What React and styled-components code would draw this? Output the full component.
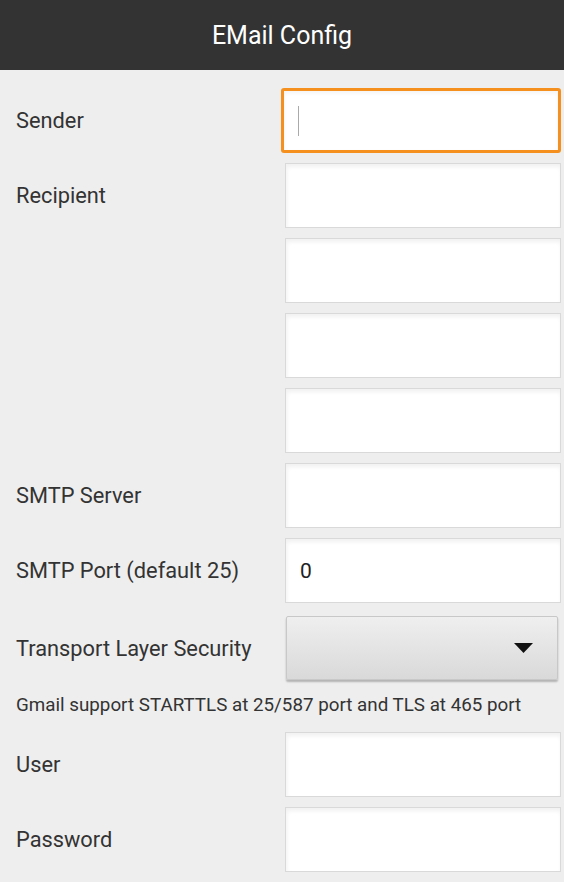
import React from 'react';
import styled, {createGlobalStyle} from 'styled-components';

const GlobalStyle = createGlobalStyle`
  html, body {
    margin: 0;
    padding: 0;
    background: #eeeeee;
  }
  body {
    font-family: Roboto, "Noto Sans", sans-serif;
  }
`;

const rows = [
    {label: "Sender", focused: true},
    {label: "Recipient"},
    {label: ""},
    {label: ""},
    {label: ""},
    {label: "SMTP Server"},
    {label: "SMTP Port (default 25)", value: "0"},
];

const App = () => {
    return (
        <Page>
            <GlobalStyle/>
            <Header>
                <Title>EMail Config</Title>
            </Header>
            <Form>
                {rows.map((row, i) => (
                    <Row key={i}>
                        <Label>{row.label}</Label>
                        <Field focused={row.focused ? 1 : 0}>
                            {row.focused && <Caret/>}
                            {row.value}
                        </Field>
                    </Row>
                ))}
                <SelectRow>
                    <Label>Transport Layer Security</Label>
                    <Select>
                        <svg width="19" height="10" viewBox="0 0 19 10">
                            <polygon points="0,0 19,0 9.5,10" fill="#111"/>
                        </svg>
                    </Select>
                </SelectRow>
                <Hint>Gmail support STARTTLS at 25/587 port and TLS at 465 port</Hint>
                <Row>
                    <Label>User</Label>
                    <Field/>
                </Row>
                <Row>
                    <Label>Password</Label>
                    <Field/>
                </Row>
            </Form>
        </Page>
    )
}

const Page = styled.div`
  width: 564px;
  min-height: 882px;
  background: #eeeeee;
`;

const Header = styled.header`
  height: 70px;
  background: #333333;
  display: flex;
  align-items: center;
  justify-content: center;
`;

const Title = styled.h1`
  margin: 0;
  color: #ffffff;
  font-size: 25px;
  font-weight: 400;
`;

const Form = styled.div`
  display: flex;
  flex-direction: column;
  gap: 10px;
  padding: 18px 3px 0 16px;
`;

const Row = styled.div`
  display: flex;
  align-items: center;
  height: 65px;
`;

const SelectRow = styled(Row)`
  height: 70px;
`;

const Label = styled.div`
  width: 269px;
  color: #333333;
  font-size: 21.8px;
`;

const Field = styled.div`
  box-sizing: border-box;
  width: 276px;
  height: 65px;
  display: flex;
  align-items: center;
  padding-left: 14px;
  background: #ffffff;
  color: #222222;
  font-size: 21px;
  border: 1px solid #d9d9d9;
  box-shadow: inset 1px 3px 4px rgba(0, 0, 0, 0.06);
  ${p => p.focused && `
    width: 281px;
    margin-left: -3px;
    border: 3px solid #f5901e;
    border-radius: 3px;
    box-shadow: inset 0 2px 4px rgba(0, 0, 0, 0.05);
  `}
`;

const Caret = styled.span`
  width: 1px;
  height: 30px;
  background: #aaaaaa;
`;

const Select = styled.div`
  box-sizing: border-box;
  width: 272px;
  height: 64px;
  margin-left: 1px;
  display: flex;
  align-items: center;
  justify-content: flex-end;
  padding-right: 24px;
  background: linear-gradient(#efefef, #d9d9d9);
  border: 1px solid #c8c8c8;
  border-radius: 2px;
  box-shadow: 0 2px 2px rgba(0, 0, 0, 0.25);
`;

const Hint = styled.div`
  box-sizing: border-box;
  height: 29px;
  padding-bottom: 5px;
  display: flex;
  align-items: center;
  color: #333333;
  font-size: 18.8px;
`;

export default App;
